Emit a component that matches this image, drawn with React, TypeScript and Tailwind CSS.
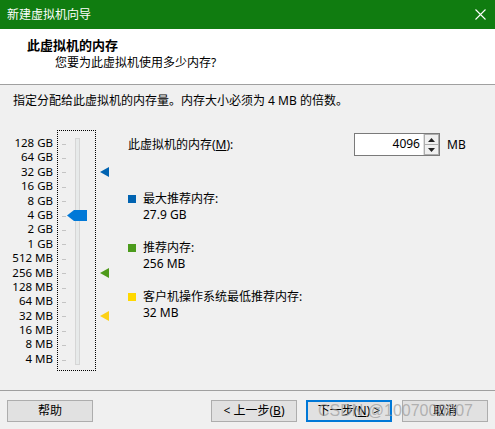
import React from "react";

const labels = [
  "128 GB", "64 GB", "32 GB", "16 GB", "8 GB", "4 GB", "2 GB", "1 GB",
  "512 MB", "256 MB", "128 MB", "64 MB", "32 MB", "16 MB", "8 MB", "4 MB",
];

function LeftTri({ color }: { color: string }) {
  return (
    <svg width="9" height="10" viewBox="0 0 9 10">
      <polygon points="0,5 9,0 9,10" fill={color} />
    </svg>
  );
}

export default function App() {
  return (
    <div className="w-[495px] h-[429px] bg-[#f0f0f0] flex flex-col overflow-hidden font-['Noto_Sans','Noto_Sans_CJK_SC',sans-serif] text-[12px] text-black">
      {/* Title bar */}
      <div className="h-[29px] bg-[#107c10] flex items-center justify-between pl-[7px] pr-[9px] text-white">
        <span className="text-[12px] leading-none">新建虚拟机向导</span>
        <svg width="11" height="11" viewBox="0 0 11 11">
          <path d="M0.5 0.5 L10.5 10.5 M10.5 0.5 L0.5 10.5" stroke="white" strokeWidth="1.1" />
        </svg>
      </div>

      {/* Header */}
      <div className="h-[56px] bg-white border-b border-[#a0a0a0] flex flex-col pt-[8px]">
        <div className="pl-[27px] text-[13px] font-bold leading-[17px]">此虚拟机的内存</div>
        <div className="pl-[55px] leading-[17px]">您要为此虚拟机使用多少内存?</div>
      </div>

      {/* Body */}
      <div className="flex-1 flex flex-col">
        <div className="pl-[13px] pt-[9px] leading-[14px]">
          指定分配给此虚拟机的内存量。内存大小必须为 4 MB 的倍数。
        </div>

        <div className="flex mt-[22px]">
          {/* slider labels */}
          <div className="w-[57px] pr-[4px] pt-[6px] flex flex-col items-end">
            {labels.map((l) => (
              <div key={l} className="h-[14.4px] leading-[14.4px] whitespace-nowrap text-[11.5px]">
                {l}
              </div>
            ))}
          </div>

          {/* dotted slider box */}
          <div className="relative w-[39px] h-[241px] border border-dotted border-black pt-[6px] pl-[4px]">
            {labels.map((l) => (
              <div key={l} className="h-[14.4px] flex items-center">
                <div className="w-[4px] h-px bg-[#c4c4c4]" />
              </div>
            ))}
            <div className="absolute left-[17px] top-[7px] w-[5px] h-[227px] bg-[#e7eaea] border border-[#d6d6d6]" />
            <svg className="absolute left-[9px] top-[79px]" width="20" height="11" viewBox="0 0 20 11">
              <polygon points="0,5.5 7,0 20,0 20,11 7,11" fill="#0078d7" />
            </svg>
          </div>

          {/* markers */}
          <div className="w-[32px] pt-[6px] pl-[4px] flex flex-col">
            {labels.map((l, i) => (
              <div key={l} className="h-[14.4px] flex items-center">
                {i === 2 && <LeftTri color="#0063b1" />}
                {i === 9 && <LeftTri color="#4e9a1a" />}
                {i === 12 && <LeftTri color="#fcd116" />}
              </div>
            ))}
          </div>

          {/* right panel */}
          <div className="flex-1 flex flex-col pr-[32px]">
            <div className="flex items-center mt-[3px] h-[23px]">
              <div className="flex-1">
                此虚拟机的内存(<span className="underline">M</span>):
              </div>
              <div className="w-[86px] h-[23px] border border-[#7a7a7a] bg-white flex items-stretch">
                <div className="flex-1 text-right pr-[3px] leading-[19px]">4096</div>
                <div className="w-[16px] flex flex-col border-l border-[#e0e0e0]">
                  <div className="flex-1 bg-[#f0f0f0] border border-[#adadad] flex items-center justify-center">
                    <svg width="7" height="4" viewBox="0 0 7 4"><polygon points="3.5,0 7,4 0,4" fill="#222" /></svg>
                  </div>
                  <div className="flex-1 bg-[#f0f0f0] border border-t-0 border-[#adadad] flex items-center justify-center">
                    <svg width="7" height="4" viewBox="0 0 7 4"><polygon points="0,0 7,0 3.5,4" fill="#222" /></svg>
                  </div>
                </div>
              </div>
              <div className="w-[23px] pl-[7px]">MB</div>
            </div>

            <div className="flex flex-col mt-[35px] gap-[17px]">
              {[
                { c: "bg-[#0063b1]", t: "最大推荐内存:", v: "27.9 GB" },
                { c: "bg-[#4b9b1c]", t: "推荐内存:", v: "256 MB" },
                { c: "bg-[#ffd800]", t: "客户机操作系统最低推荐内存:", v: "32 MB" },
              ].map((it) => (
                <div key={it.t} className="flex">
                  <div className="w-[15px] pt-[4px]">
                    <div className={`w-[8px] h-[8px] ${it.c}`} />
                  </div>
                  <div className="flex flex-col leading-[16px]">
                    <div>{it.t}</div>
                    <div>{it.v}</div>
                  </div>
                </div>
              ))}
            </div>
          </div>
        </div>
      </div>

      {/* Footer */}
      <div className="relative border-t border-[#a0a0a0] h-[39px] pt-[9px] px-[7px] flex">
        <button className="w-[86px] h-[22px] bg-[#e1e1e1] border border-[#adadad] text-[12px]">帮助</button>
        <div className="flex-1" />
        <button className="w-[86px] h-[22px] bg-[#e1e1e1] border border-[#adadad] text-[12px]">
          &lt; 上一步(<span className="underline">B</span>)
        </button>
        <button className="ml-[9px] w-[86px] h-[22px] bg-[#e1e1e1] border-2 border-[#0078d7] text-[12px]">
          下一步(<span className="underline">N</span>) &gt;
        </button>
        <button className="ml-[10px] w-[86px] h-[22px] bg-[#e1e1e1] border border-[#adadad] text-[12px]">取消</button>
        <div className="absolute left-[318px] top-[11px] text-[16px] leading-[18px] text-[#9a9a9a]/70 whitespace-nowrap pointer-events-none font-['Liberation_Sans',sans-serif]">
          CSDN @1007000007
        </div>
      </div>
    </div>
  );
}
